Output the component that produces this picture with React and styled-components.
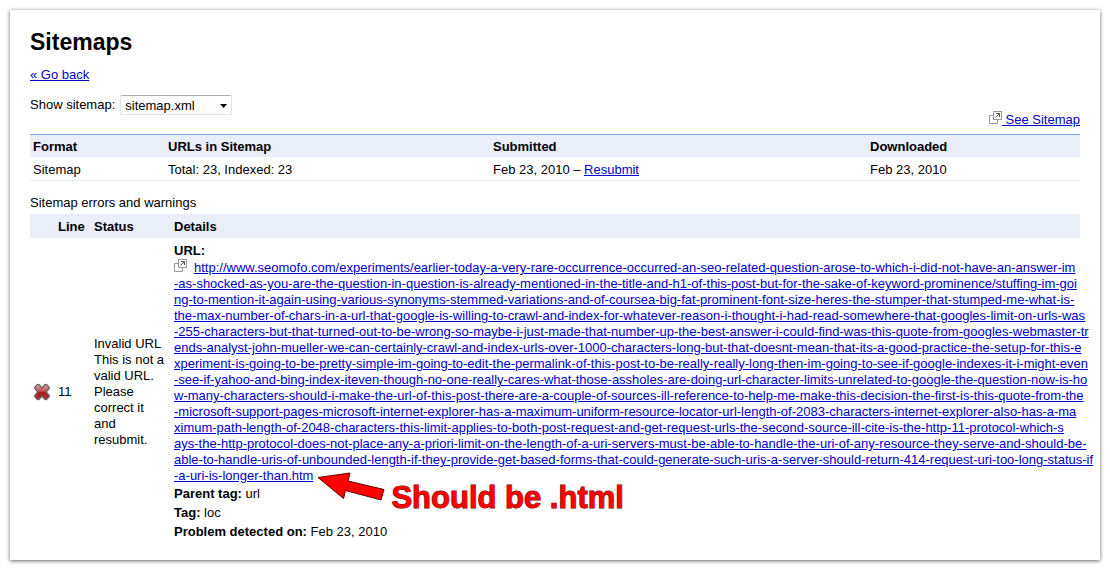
import React from 'react';
import styled, { createGlobalStyle } from 'styled-components';

const GlobalStyle = createGlobalStyle`
  * { box-sizing: border-box; }
  body {
    margin: 0;
    background: #fff;
    color: #000;
    font: 13px/16px "Liberation Sans", Arial, sans-serif;
  }
`;

const Panel = styled.main`
  margin: 10px;
  padding: 20px 20px 14px;
  background: #fff;
  box-shadow: 0 1px 4px rgba(0, 0, 0, 0.6);
`;

const Title = styled.h1`
  margin: 0 0 13px;
  font-size: 23px;
  line-height: 24px;
`;

const Link = styled.a`
  color: #0000cc;
  text-decoration: underline;
`;

const Toolbar = styled.div`
  display: flex;
  justify-content: space-between;
  align-items: flex-end;
  height: 33px;
  margin: 12px 0 6px;
`;

const Filter = styled.div`
  display: flex;
  align-items: center;
  align-self: flex-start;
  gap: 5px;
`;

const SelectBox = styled.div`
  position: relative;
  width: 112px;
`;

const Select = styled.select`
  display: block;
  appearance: none;
  width: 100%;
  height: 20px;
  padding: 1px 20px 0 4px;
  border: 1px solid #e2e3ea;
  border-top-color: #abadb3;
  border-radius: 2px;
  background: #fff;
  color: #000;
  font: inherit;
`;

const SelectArrow = styled.svg`
  position: absolute;
  top: 9px;
  right: 5px;
  pointer-events: none;
`;

const Table = styled.table`
  width: 100%;
  border-collapse: collapse;
  table-layout: fixed;
  border-top: ${(p) => (p.$ruled ? '1px solid #77a4dc' : 'none')};
`;

const Col = styled.col`
  width: ${(p) => (p.$width ? `${p.$width}px` : 'auto')};
`;

const HeadCell = styled.th`
  padding: 4px 3px 2px;
  height: ${(p) => p.$height}px;
  background: #e9eef9;
  text-align: left;
`;

const Cell = styled.td`
  padding: ${(p) => (p.$ruled ? '5px 3px 2px' : '5px 3px')};
  border-bottom: ${(p) => (p.$ruled ? '1px solid #e5ecf9' : 'none')};
  vertical-align: middle;
`;

const Caption = styled.h2`
  margin: 14px 0 3px;
  font-size: 13px;
  font-weight: normal;
  line-height: 16px;
`;

const Icon = styled.svg`
  display: ${(p) => (p.$block ? 'block' : 'inline')};
  vertical-align: baseline;
  margin-right: ${(p) => p.$gap || 0}px;
`;

const UrlBlock = styled.div`
  white-space: nowrap;
`;

const Detail = styled.div`
  line-height: 19px;
`;

const LinkEnd = styled.span`
  position: relative;
`;

const Note = styled.span`
  position: absolute;
  left: 4px;
  top: 4px;
  display: flex;
  align-items: flex-start;
  gap: 6px;
`;

const NoteText = styled.strong`
  padding-top: 8px;
  color: #ff0000;
  font-size: 31px;
  line-height: 36px;
  -webkit-text-stroke: 1px #600000;
  paint-order: stroke fill;
`;

function PopoutIcon({ gap }) {
  return (
    <Icon $gap={gap} width="13" height="13" viewBox="0 0 13 13" fill="none" aria-hidden="true">
      <path d="M4.5 4.5h-4v8h8v-4" stroke="#999" />
      <rect x="4.5" y="0.5" width="8" height="8" fill="#fff" stroke="#999" />
      <path d="M7 2.5h3.5V6M10.5 2.5l-4 4" stroke="#555" />
    </Icon>
  );
}

function ErrorIcon() {
  return (
    <Icon $block width="18" height="18" viewBox="0 0 18 18" role="img" aria-label="Error">
      <defs>
        <linearGradient id="cross" x1="0" y1="0" x2="0" y2="1">
          <stop offset="0" stopColor="#dfa0a0" />
          <stop offset="0.45" stopColor="#c4565a" />
          <stop offset="0.5" stopColor="#a51c1c" />
          <stop offset="1" stopColor="#b5302a" />
        </linearGradient>
      </defs>
      <path
        d="M4.500 1.500Q5.500 1 6.500 2L9 5l2.500-3q1-1 2-.5l2.500 2.500q.8 1-.2 2L13.200 9l2.600 3q1 1 .2 2l-2.500 2.500q-1 .5-2-.5L9 13l-2.500 3q-1 1-2 .5L2 14q-.8-1 .2-2L4.800 9 2.200 6q-1-1-.2-2z"
        fill="url(#cross)"
        stroke="#6d6567"
        strokeWidth="1.3"
        strokeLinejoin="round"
      />
    </Icon>
  );
}

function Arrow() {
  return (
    <svg width="68" height="30" viewBox="0 0 68 30" aria-hidden="true">
      <path d="M1 5.5 33 1l-2 8 36 8.5-3 10.500-35.500-9.500-2 8z" fill="#f00" stroke="#600" strokeLinejoin="round" />
    </svg>
  );
}

const urlLines = [
  'http://www.seomofo.com/experiments/earlier-today-a-very-rare-occurrence-occurred-an-seo-related-question-arose-to-which-i-did-not-have-an-answer-im',
  '-as-shocked-as-you-are-the-question-in-question-is-already-mentioned-in-the-title-and-h1-of-this-post-but-for-the-sake-of-keyword-prominence/stuffing-im-goi',
  'ng-to-mention-it-again-using-various-synonyms-stemmed-variations-and-of-coursea-big-fat-prominent-font-size-heres-the-stumper-that-stumped-me-what-is-',
  'the-max-number-of-chars-in-a-url-that-google-is-willing-to-crawl-and-index-for-whatever-reason-i-thought-i-had-read-somewhere-that-googles-limit-on-urls-was',
  '-255-characters-but-that-turned-out-to-be-wrong-so-maybe-i-just-made-that-number-up-the-best-answer-i-could-find-was-this-quote-from-googles-webmaster-tr',
  'ends-analyst-john-mueller-we-can-certainly-crawl-and-index-urls-over-1000-characters-long-but-that-doesnt-mean-that-its-a-good-practice-the-setup-for-this-e',
  'xperiment-is-going-to-be-pretty-simple-im-going-to-edit-the-permalink-of-this-post-to-be-really-really-long-then-im-going-to-see-if-google-indexes-it-i-might-even',
  '-see-if-yahoo-and-bing-index-iteven-though-no-one-really-cares-what-those-assholes-are-doing-url-character-limits-unrelated-to-google-the-question-now-is-ho',
  'w-many-characters-should-i-make-the-url-of-this-post-there-are-a-couple-of-sources-ill-reference-to-help-me-make-this-decision-the-first-is-this-quote-from-the',
  '-microsoft-support-pages-microsoft-internet-explorer-has-a-maximum-uniform-resource-locator-url-length-of-2083-characters-internet-explorer-also-has-a-ma',
  'ximum-path-length-of-2048-characters-this-limit-applies-to-both-post-request-and-get-request-urls-the-second-source-ill-cite-is-the-http-11-protocol-which-s',
  'ays-the-http-protocol-does-not-place-any-a-priori-limit-on-the-length-of-a-uri-servers-must-be-able-to-handle-the-uri-of-any-resource-they-serve-and-should-be-',
  'able-to-handle-uris-of-unbounded-length-if-they-provide-get-based-forms-that-could-generate-such-uris-a-server-should-return-414-request-uri-too-long-status-if',
  '-a-uri-is-longer-than.htm',
];

export default function App() {
  return (
    <>
      <GlobalStyle />
      <Panel>
        <Title>Sitemaps</Title>
        <Link href="#back">« Go back</Link>

        <Toolbar>
          <Filter>
            <label htmlFor="sitemap">Show sitemap:</label>
            <SelectBox>
              <Select id="sitemap" defaultValue="sitemap.xml">
                <option>sitemap.xml</option>
              </Select>
              <SelectArrow width="7" height="4" viewBox="0 0 7 4" aria-hidden="true">
                <path d="M0 0h7L3.500 4z" />
              </SelectArrow>
            </SelectBox>
          </Filter>
          <div>
            <PopoutIcon />
            <Link href="#sitemap">&nbsp;See Sitemap</Link>
          </div>
        </Toolbar>

        <Table $ruled>
          <colgroup>
            <Col $width={135} />
            <Col $width={325} />
            <Col $width={377} />
            <Col />
          </colgroup>
          <thead>
            <tr>
              <HeadCell $height={22}>Format</HeadCell>
              <HeadCell $height={22}>URLs in Sitemap</HeadCell>
              <HeadCell $height={22}>Submitted</HeadCell>
              <HeadCell $height={22}>Downloaded</HeadCell>
            </tr>
          </thead>
          <tbody>
            <tr>
              <Cell $ruled>Sitemap</Cell>
              <Cell $ruled>Total: 23, Indexed: 23</Cell>
              <Cell $ruled>
                Feb 23, 2010 – <Link href="#resubmit">Resubmit</Link>
              </Cell>
              <Cell $ruled>Feb 23, 2010</Cell>
            </tr>
          </tbody>
        </Table>

        <Caption>Sitemap errors and warnings</Caption>
        <Table>
          <colgroup>
            <Col $width={25} />
            <Col $width={36} />
            <Col $width={80} />
            <Col />
          </colgroup>
          <thead>
            <tr>
              <HeadCell $height={24} />
              <HeadCell $height={24}>Line</HeadCell>
              <HeadCell $height={24}>Status</HeadCell>
              <HeadCell $height={24}>Details</HeadCell>
            </tr>
          </thead>
          <tbody>
            <tr>
              <Cell>
                <ErrorIcon />
              </Cell>
              <Cell>11</Cell>
              <Cell>
                Invalid URL
                <br />
                This is not a valid URL. Please correct it and resubmit.
              </Cell>
              <Cell>
                <strong>URL:</strong>
                <UrlBlock>
                  <PopoutIcon gap={7} />
                  <Link href="#url">
                    {urlLines.map((line, i) => (
                      <React.Fragment key={line}>
                        {i > 0 && <br />}
                        {line}
                      </React.Fragment>
                    ))}
                  </Link>
                  <LinkEnd>
                    <Note>
                      <Arrow />
                      <NoteText>Should be .html</NoteText>
                    </Note>
                  </LinkEnd>
                </UrlBlock>
                <Detail>
                  <strong>Parent tag:</strong> url
                </Detail>
                <Detail>
                  <strong>Tag:</strong> loc
                </Detail>
                <Detail>
                  <strong>Problem detected on:</strong> Feb 23, 2010
                </Detail>
              </Cell>
            </tr>
          </tbody>
        </Table>
      </Panel>
    </>
  );
}
